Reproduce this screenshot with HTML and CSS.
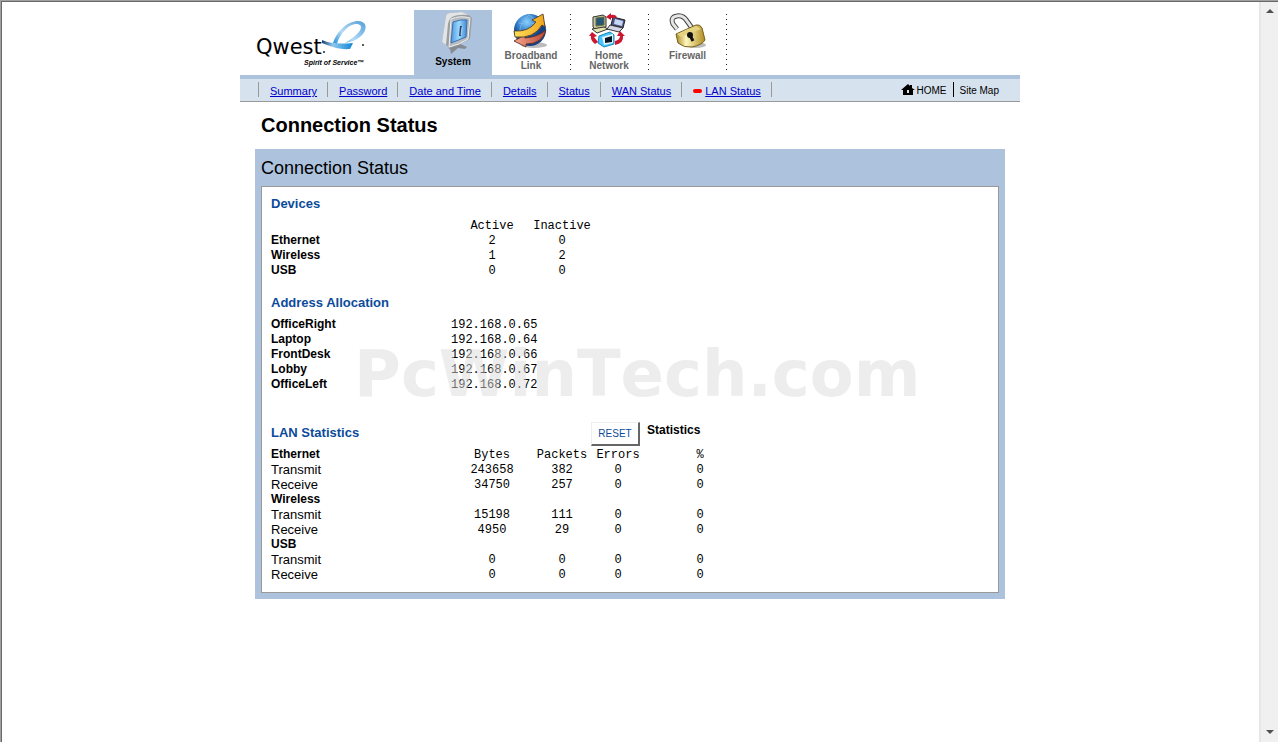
FILE: index.html
```html
<!DOCTYPE html>
<html lang="en">
<head>
<meta charset="utf-8">
<title>Connection Status</title>
<link rel="stylesheet" href="styles.css">
</head>
<body>
<div class="window">
  <div class="page">
    <header class="header">
      <svg class="logo" viewBox="0 0 140 65" role="img" aria-label="Qwest Spirit of Service">
        <defs>
          <linearGradient id="swoosh" x1="0" y1="0" x2="1" y2="0">
            <stop offset="0" stop-color="#1a3f70"/><stop offset=".35" stop-color="#8fc8ee"/><stop offset="1" stop-color="#0f86d4"/>
          </linearGradient>
          <linearGradient id="loop" x1="0" y1="1" x2="1" y2="0">
            <stop offset="0" stop-color="#1e8fd8"/><stop offset=".4" stop-color="#b5dbf5"/><stop offset="1" stop-color="#4f9fd8"/>
          </linearGradient>
        </defs>
        <path d="M76 33C79 24 87 13 99 11C109 10 111 17 106 24C101 30 94 32 88 33C96 28 104 22 104 17C103 12 94 14 89 19C84 24 81 29 80 34Z" fill="url(#loop)"/>
        <path d="M65 30C74 34 84 34 96 33L93 39C82 40 72 36 65 33Z" fill="url(#swoosh)"/>
        <circle cx="106" cy="35" r="1" fill="#222"/><circle cx="67" cy="42" r="1" fill="#222"/>
        <text class="logo-name" x="-1" y="44">Qwest</text>
        <text class="logo-tag" x="47" y="55">Spirit of Service™</text>
      </svg>
      <nav class="tabs" aria-label="Sections">
        <a class="tab tab-active" href="#system">
          <svg class="tab-icon tab-icon-tall" viewBox="0 0 44 46" aria-hidden="true">
            <defs><linearGradient id="screen"><stop offset="0" stop-color="#4e98e0"/><stop offset=".5" stop-color="#9bd8ff"/><stop offset="1" stop-color="#4288d2"/></linearGradient></defs>
            <path d="M17 38L27 33L36 37L34 39L27 38L20 44L19 39Z" fill="#858b91"/>
            <path d="M15 6Q16 3 19 3L31 2Q38 4 41 8L39 29L27 35L19 38L11 32Z" fill="#999ea3"/>
            <path d="M15 6Q16 3 19 3L31 2L38 5Q27 4 21 7Q18 9 17 14L15 35L11 32Z" fill="#e2e4e5"/>
            <path d="M20 9Q29 5 39 8L37 29L28 34L18 37Z" fill="#b8bcc0" stroke="#eee"/>
            <path d="M22 12Q30 9 36 10L35 27L20 33Z" fill="url(#screen)" stroke="#3b71af"/>
            <path d="M30 16L29 26" stroke="#244870" stroke-width="2"/><path d="M31 17L30 25" stroke="#d6ecff" stroke-width=".7"/>
          </svg>
          <span>System</span>
        </a>
        <a class="tab" href="#broadband">
          <svg class="tab-icon" viewBox="0 0 40 36" aria-hidden="true">
            <defs><radialGradient id="globe" cx=".4" cy=".25"><stop offset="0" stop-color="#8bd2ff"/><stop offset=".6" stop-color="#347fca"/><stop offset="1" stop-color="#153f83"/></radialGradient>
            <linearGradient id="gold"><stop offset="0" stop-color="#ffde5a"/><stop offset="1" stop-color="#f0a51c"/></linearGradient>
            <linearGradient id="copper"><stop offset="0" stop-color="#f5a68d"/><stop offset="1" stop-color="#b94632"/></linearGradient></defs>
            <ellipse cx="23" cy="32" rx="13" ry="3" fill="#bbb"/>
            <circle cx="19" cy="17" r="16" fill="url(#globe)"/>
            <path d="M8 10Q19 13 30 8M18 2Q8 10 9 20M18 2Q26 6 26 16" fill="none" stroke="#84bdeb" stroke-width=".7"/>
            <path d="M35 17Q27 24 14 25V22L3 28L15 34V31Q31 31 35 17Z" fill="url(#copper)" stroke="#60352d" stroke-width=".9"/>
            <path d="M3 18Q18 19 25 9L21 7L32 1L34 14L31 12Q23 26 4 24Z" fill="url(#gold)" stroke="#514029" stroke-width=".9"/>
          </svg>
          <span>Broadband<br>Link</span>
        </a>
        <a class="tab tab-dotted" href="#network">
          <svg class="tab-icon" viewBox="0 0 40 36" aria-hidden="true">
            <path d="M4 4L14 2L17 4V14L6 16L4 14Z" fill="#c9c899" stroke="#333"/><path d="M7 5L15 4V12L7 13Z" fill="#245878" stroke="#686b3e"/><path d="M3 16L15 14L19 16L8 20Z" fill="#e5e3ae" stroke="#333"/>
            <path d="M24 4L36 7L34 15L22 12Z" fill="#505386" stroke="#222"/><path d="M26 6L34 8L33 13L25 11Z" fill="#c5d8f4"/><path d="M21 12L34 15L30 19L18 16Z" fill="#d5d6e6" stroke="#333"/>
            <path d="M10 23L21 19L25 22L25 31L15 34L9 30Z" fill="#4ac4ff" stroke="#1687bb"/><path d="M13 24L24 21V30L15 32Z" fill="#e4f7ff"/><path d="M16 25L23 23V29L16 30Z" fill="#081525"/>
            <path d="M17 4L22 0V2Q26 1 28 4L25 5L22 5V7ZM3 19L8 23L5 24L9 29L6 31Q1 27 2 23L0 23ZM31 18L36 23L34 23Q35 30 26 32V28Q31 27 31 23H28Z" fill="#cd1630"/>
          </svg>
          <span>Home<br>Network</span>
        </a>
        <a class="tab tab-dotted tab-last" href="#firewall">
          <svg class="tab-icon" viewBox="0 0 40 36" aria-hidden="true">
            <defs><linearGradient id="brass"><stop offset="0" stop-color="#a78924"/><stop offset=".35" stop-color="#fff7bd"/><stop offset="1" stop-color="#b18b20"/></linearGradient></defs>
            <ellipse cx="28" cy="32" rx="10" ry="3" fill="#bbb"/>
            <path d="M9 16L5 11Q2 4 9 3Q15 2 19 8L24 15" fill="none" stroke="#444" stroke-width="5"/><path d="M9 16L5 11Q2 4 9 3Q15 2 19 8L24 15" fill="none" stroke="#e6e6e6" stroke-width="3"/>
            <path d="M8 21L28 12Q32 11 34 15L37 27Q34 32 24 34Q16 35 10 30Z" fill="url(#brass)" stroke="#756018"/>
            <path d="M9 21L28 13L33 16L13 24Z" fill="#e6d382"/>
            <circle cx="22" cy="22" r="3" fill="#111"/><path d="M22 22L25 28" stroke="#111" stroke-width="3"/>
          </svg>
          <span>Firewall</span>
        </a>
      </nav>
    </header>

    <div class="subnav">
      <nav class="links" aria-label="System pages">
        <a href="#summary">Summary</a>
        <a href="#password">Password</a>
        <a href="#date">Date and Time</a>
        <a href="#details">Details</a>
        <a href="#status">Status</a>
        <a href="#wan">WAN Status</a>
        <a class="current" href="#lan" aria-current="page">LAN Status</a>
      </nav>
      <nav class="utility" aria-label="Site">
        <a href="#home"><svg class="home-icon" viewBox="0 0 14 11" aria-hidden="true"><path d="M7 0L9 2V1H11V4L14 6H12V11H2V6H0Z" fill="#000"/><path d="M6 6H8V9H6Z" fill="#d6e2ee"/></svg>HOME</a>
        <a href="#map">Site Map</a>
      </nav>
    </div>

    <main>
      <h1 class="page-title">Connection Status</h1>
      <section class="panel">
        <h2 class="panel-title">Connection Status</h2>
        <div class="box">
          <h3 class="heading">Devices</h3>
          <table class="data devices">
            <colgroup><col class="c-name"><col class="c-bytes"><col class="c-packets"></colgroup>
            <thead><tr><td></td><th scope="col">Active</th><th scope="col">Inactive</th></tr></thead>
            <tbody>
              <tr><th scope="row">Ethernet</th><td>2</td><td>0</td></tr>
              <tr><th scope="row">Wireless</th><td>1</td><td>2</td></tr>
              <tr><th scope="row">USB</th><td>0</td><td>0</td></tr>
            </tbody>
          </table>

          <section class="allocation">
            <h3 class="heading">Address Allocation</h3>
            <table class="data addresses">
              <colgroup><col class="c-name"><col class="c-address"></colgroup>
              <tbody>
                <tr><th scope="row">OfficeRight</th><td>192.168.0.65</td></tr>
                <tr><th scope="row">Laptop</th><td>192.168.0.64</td></tr>
                <tr><th scope="row">FrontDesk</th><td>192.168.0.66</td></tr>
                <tr><th scope="row">Lobby</th><td>192.168.0.67</td></tr>
                <tr><th scope="row">OfficeLeft</th><td>192.168.0.72</td></tr>
              </tbody>
            </table>
            <div class="watermark">PcWinTech.com</div>
          </section>

          <div class="lan-head">
            <h3 class="heading">LAN Statistics</h3>
            <button class="reset" type="button">RESET</button>
            <strong class="stats-label">Statistics</strong>
          </div>
          <table class="data">
            <colgroup><col class="c-name"><col class="c-bytes"><col class="c-packets"><col class="c-errors"><col class="c-percent"></colgroup>
            <tbody>
              <tr><th scope="row">Ethernet</th><td>Bytes</td><td>Packets</td><td>Errors</td><td>%</td></tr>
              <tr><th class="plain" scope="row">Transmit</th><td>243658</td><td>382</td><td>0</td><td>0</td></tr>
              <tr><th class="plain" scope="row">Receive</th><td>34750</td><td>257</td><td>0</td><td>0</td></tr>
              <tr><th scope="row">Wireless</th><td></td><td></td><td></td><td></td></tr>
              <tr><th class="plain" scope="row">Transmit</th><td>15198</td><td>111</td><td>0</td><td>0</td></tr>
              <tr><th class="plain" scope="row">Receive</th><td>4950</td><td>29</td><td>0</td><td>0</td></tr>
              <tr><th scope="row">USB</th><td></td><td></td><td></td><td></td></tr>
              <tr><th class="plain" scope="row">Transmit</th><td>0</td><td>0</td><td>0</td><td>0</td></tr>
              <tr><th class="plain" scope="row">Receive</th><td>0</td><td>0</td><td>0</td><td>0</td></tr>
            </tbody>
          </table>
        </div>
      </section>
    </main>
  </div>
  <div class="scrollbar" aria-hidden="true">
    <svg class="arrow" viewBox="0 0 8 4"><path d="M4 0L8 4H0Z"/></svg>
    <svg class="arrow" viewBox="0 0 8 4"><path d="M0 0H8L4 4Z"/></svg>
  </div>
</div>
</body>
</html>
```

FILE: styles.css
```css
* { box-sizing: border-box; }

body {
  margin: 0;
  background: #fff;
  color: #000;
  font-family: "Liberation Sans", Arial, sans-serif;
  font-size: 12px;
}

h1, h2, h3 { margin: 0; }

.window {
  display: flex;
  min-height: 100vh;
  border-top: 1px solid #a0a0a0;
  border-left: 1px solid #a0a0a0;
  box-shadow: inset 1px 1px 0 #696969;
}

.page {
  width: 100%;
  max-width: 780px;
  margin: 0 auto;
  padding-top: 9px;
}

.scrollbar {
  display: flex;
  flex-direction: column;
  justify-content: space-between;
  align-items: center;
  width: 19px;
  margin-top: 1px;
  padding: 7px 0 8px;
  background: #f0f0f0;
  border-left: 2px solid #e6e6e6;
}

.arrow { width: 8px; height: 4px; fill: #505050; }

.header {
  display: flex;
  height: 69px;
  border-bottom: 4px solid #adc3dd;
}

.logo { width: 140px; height: 65px; margin: 0 17px; flex: none; overflow: visible; }
.logo-name { font-family: "DejaVu Sans", Verdana, sans-serif; font-size: 21px; }
.logo-tag { font-size: 7px; font-weight: bold; font-style: italic; }

.tabs { display: flex; }

.tab {
  display: flex;
  flex-direction: column;
  align-items: center;
  width: 78px;
  padding-top: 3px;
  color: #666;
  font-size: 10px;
  font-weight: bold;
  line-height: 10px;
  text-align: center;
  text-decoration: none;
}

.tab-active { background: #adc3dd; color: #000; padding-top: 0; }
.tab-icon { width: 40px; height: 36px; margin-bottom: 2px; }
.tab-icon-tall { width: 44px; height: 46px; margin-bottom: 1px; }

.tab-dotted {
  background: repeating-linear-gradient(#222 0 1px, transparent 1px 5px) left 4px / 1px 56px no-repeat;
}

.tab-last {
  width: 79px;
  background:
    repeating-linear-gradient(#222 0 1px, transparent 1px 5px) left 4px / 1px 56px no-repeat,
    repeating-linear-gradient(#222 0 1px, transparent 1px 5px) right 4px / 1px 56px no-repeat;
}

.subnav {
  display: flex;
  justify-content: space-between;
  height: 23px;
  padding: 3px 21px 4px 18px;
  background: #d6e2ee;
  border-bottom: 1px solid #999;
  font-size: 11px;
  line-height: 18px;
}

.links, .utility { display: flex; }

.links a {
  height: 15px;
  padding: 0 10px 0 11px;
  border-left: 1px solid #999;
  color: #00c;
}

.links .current { border-right: 1px solid #999; }

.current::before {
  content: "";
  display: inline-block;
  width: 9px;
  height: 4px;
  margin-right: 3px;
  border-radius: 2px;
  background: #f00;
  vertical-align: 2px;
}

.utility { font-size: 10px; }
.utility a { height: 15px; color: #000; text-decoration: none; }
.utility a + a { margin-left: 6px; padding-left: 6px; border-left: 1px solid #000; }
.home-icon { width: 14px; height: 11px; margin-right: 2px; vertical-align: -1px; }

.page-title { padding-left: 21px; font-size: 20px; line-height: 47px; }

.panel { margin: 0 15px; padding: 0 6px 6px; background: #adc3dd; }
.panel-title { padding-top: 2px; font-size: 18px; font-weight: normal; line-height: 35px; }
.box { padding: 8px 9px 10px; background: #fff; border: 1px solid #999; }

.heading {
  margin-bottom: 5px;
  color: #0b4b9b;
  font-size: 13px;
  line-height: 18px;
}

.data { table-layout: fixed; width: 484px; max-width: 100%; border-collapse: collapse; }
.data th, .data td { height: 15px; padding: 0; line-height: 15px; }

.data td, .data thead th {
  padding-top: 1px;
  font-family: "Liberation Mono", "Courier New", monospace;
  font-size: 12px;
  font-weight: normal;
  line-height: 14px;
  text-align: center;
}

.data tbody th { font-size: 12px; text-align: left; }
.data tbody .plain { font-size: 13px; font-weight: normal; }
.data.addresses td { text-align: left; }
.data.devices { width: 320px; }

.c-name { width: 180px; }
.c-bytes { width: 82px; }
.c-packets { width: 58px; }
.c-errors { width: 54px; }
.c-percent { width: 110px; }

.allocation { position: relative; margin-top: 16px; }

.watermark {
  position: absolute;
  left: 83px;
  bottom: -19px;
  color: rgba(220, 220, 220, .5);
  font: bold 64px/74px "DejaVu Sans", Verdana, sans-serif;
  font-kerning: none;
  white-space: nowrap;
  pointer-events: none;
}

.lan-head {
  display: grid;
  grid-template-columns: 320px 49px 1fr;
  align-items: start;
  margin-top: 30px;
}

.lan-head .heading { margin: 2px 0 0; }

.reset {
  height: 24px;
  margin-bottom: 1px;
  padding: 0;
  background: #fff;
  border: 1px solid #eee;
  border-right: 2px solid #666;
  border-bottom: 2px solid #666;
  color: #0b4b9b;
  font-family: inherit;
  font-size: 10px;
}

.stats-label { padding-left: 7px; line-height: 16px; }
```
